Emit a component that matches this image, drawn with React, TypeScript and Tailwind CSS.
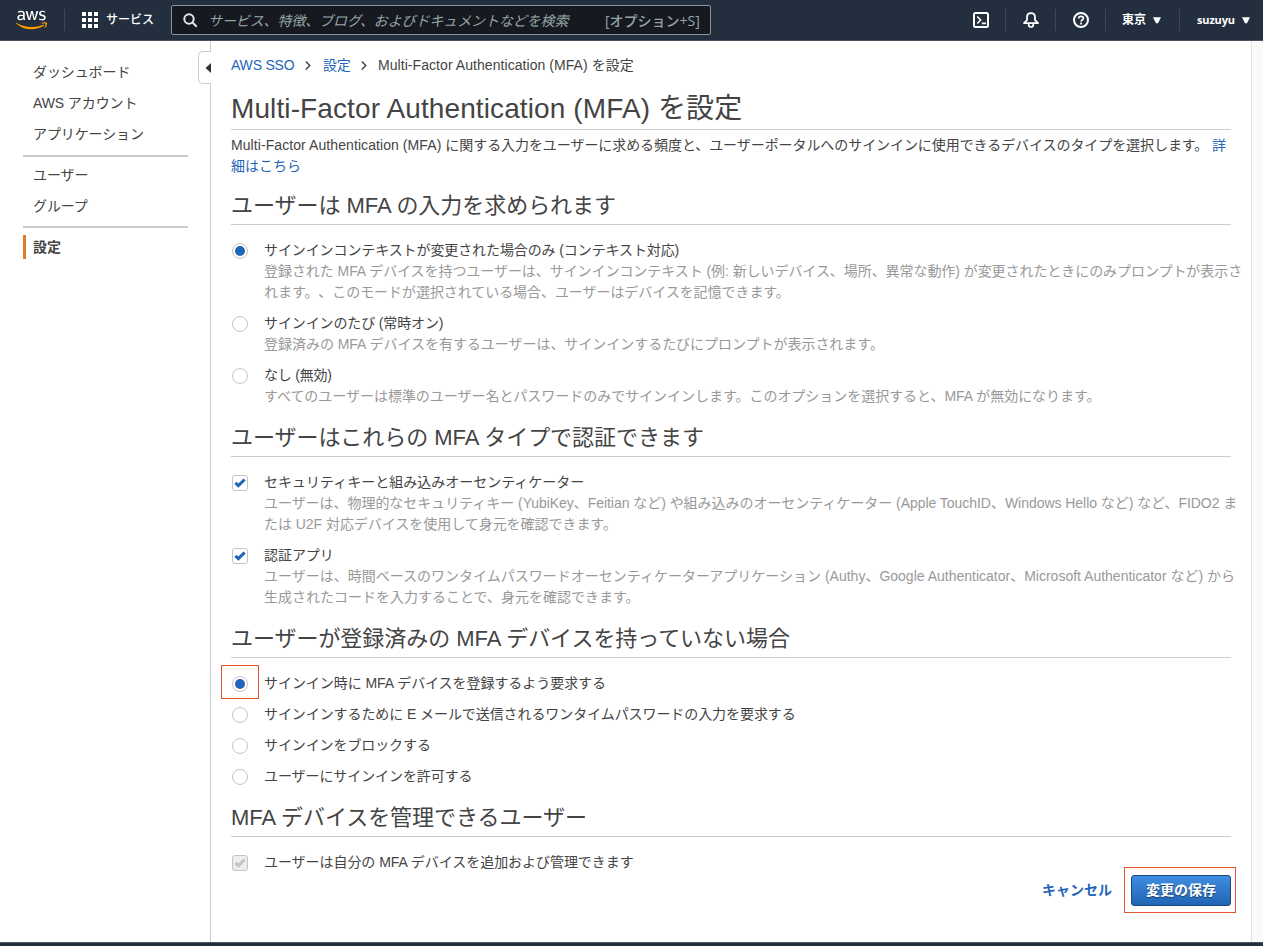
import React from "react";
import { FaAws } from "react-icons/fa";

const cjk = "font-['Liberation_Sans','Noto_Sans_CJK_JP',sans-serif]";
const ember = "font-['Open_Sans','Noto_Sans_CJK_JP',sans-serif]";

function Divider({ className = "" }: { className?: string }) {
  return <span className={`h-[22px] w-px shrink-0 bg-[#414750] ${className}`} />;
}

function Caret() {
  return (
    <svg width="8" height="7" viewBox="0 0 8 7" className="shrink-0" fill="#fff">
      <path d="M0 0.3h8L5 6.3H3z" />
    </svg>
  );
}

function Chevron() {
  return (
    <svg width="6" height="9" viewBox="0 0 6 9" className="shrink-0" fill="none" stroke="#444" strokeWidth="1.4">
      <path d="M0.8 0.6L4.8 4.5L0.8 8.4" />
    </svg>
  );
}

function Header() {
  return (
    <header className={`flex h-[41px] shrink-0 items-center border-b border-[#49525e] bg-[#232f3e] text-white ${ember}`}>
      <svg width="0" height="0" className="absolute">
        <defs>
          <linearGradient id="logo" x1="0" y1="0" x2="0" y2="1">
            <stop offset="0.61" stopColor="#fff" />
            <stop offset="0.61" stopColor="#f90" />
          </linearGradient>
        </defs>
      </svg>
      <div className="ml-4 flex h-10 w-12 items-center">
        <FaAws fill="url(#logo)" className="h-[26px] w-[31px]" />
      </div>
      <Divider />
      <svg width="16" height="16" viewBox="0 0 16 16" className="ml-[17px] shrink-0" fill="#fff">
        {[0, 6, 12].map((y) => [0, 6, 12].map((x) => <rect key={`${x}-${y}`} x={x} y={y} width="4" height="4" />))}
      </svg>
      <span className="ml-2 w-[65px] text-[12px] leading-4 font-medium whitespace-nowrap">サービス</span>
      <div className="flex h-[30px] w-[540px] items-center rounded-[2px] border border-[#879596] bg-[#16191f] text-[14px] text-[#95a5a6]">
        <svg width="15" height="15" viewBox="0 0 15 15" className="ml-[11px] shrink-0" fill="none" stroke="#e3e6e6" strokeWidth="2">
          <circle cx="6" cy="6" r="4.7" />
          <path d="M9.5 9.5l4.2 4.2" />
        </svg>
        <span className="ml-[10px] w-[397px] tracking-[-0.1px] whitespace-nowrap italic">サービス、特徴、ブログ、およびドキュメントなどを検索</span>
        <span className="font-medium whitespace-nowrap">[オプション+S]</span>
      </div>
      <svg width="16" height="16" viewBox="0 0 16 16" className="ml-[262px] shrink-0" fill="none" stroke="#fff" strokeWidth="2">
        <rect x="1" y="1" width="14" height="14" rx="1.5" />
        <path d="M4.3 4.5L7.6 8l-3.3 3.5M8.8 11.3H13" strokeWidth="1.7" />
      </svg>
      <Divider className="ml-4" />
      <svg width="16" height="16" viewBox="0 0 16 16" className="ml-[17px] shrink-0" fill="none" stroke="#fff" strokeWidth="1.8" strokeLinejoin="round">
        <path d="M1 11.1L4 8.2V5.4C4 2.9 5.5 1.2 8 1.2s4 1.7 4 4.2v2.8l3 2.9z" />
        <path d="M5.7 12v.7c0 1.4 1 2.3 2.3 2.3s2.3-.9 2.3-2.3V12" strokeWidth="1.7" />
      </svg>
      <Divider className="ml-4" />
      <svg width="16" height="16" viewBox="0 0 16 16" className="ml-[17px] shrink-0" fill="none" stroke="#fff" strokeWidth="2">
        <circle cx="8" cy="8" r="7" />
        <path d="M5.7 6.5C5.7 5 6.7 4.3 8 4.3s2.4.8 2.4 2c0 1.7-2.3 1.6-2.3 3.3M8.1 10.6v2" strokeWidth="1.7" />
      </svg>
      <Divider className="ml-4" />
      <span className="ml-4 w-[31px] text-[12px] font-bold whitespace-nowrap">東京</span>
      <Caret />
      <Divider className="ml-[18px]" />
      <span className="ml-[17px] w-[45px] text-[11px] font-bold tracking-[-0.15px] whitespace-nowrap">suzuyu</span>
      <Caret />
    </header>
  );
}

function Sidebar() {
  const item = "flex h-[31px] items-center pl-[10px] whitespace-nowrap tracking-[-0.1px]";
  return (
    <nav className="w-[210px] shrink-0 pt-4 pr-[22px] pl-[23px]">
      <div className={item}>ダッシュボード</div>
      <div className={item}>AWS アカウント</div>
      <div className={item}>アプリケーション</div>
      <div className="mt-[5px] mb-[3px] h-[2px] bg-[#ccc]" />
      <div className={item}>ユーザー</div>
      <div className={item}>グループ</div>
      <div className="mt-[4px] mb-[7px] h-[2px] bg-[#ccc]" />
      <div className="flex h-6 items-center border-l-[3px] border-[#dd7b26] pl-[7px] font-bold">設定</div>
    </nav>
  );
}

function Radio({ on = false }: { on?: boolean }) {
  return (
    <span className="flex size-4 shrink-0 items-center justify-center rounded-full border border-[#c4c4c4] bg-white">
      {on && <span className="size-[10px] rounded-full bg-[#1f66b8]" />}
    </span>
  );
}

function Check({ disabled = false }: { disabled?: boolean }) {
  return (
    <span className={`flex size-4 shrink-0 items-center justify-center rounded-[3px] border border-[#c4c4c4] ${disabled ? "bg-[#eee]" : "bg-white"}`}>
      <svg width="12" height="10" viewBox="0 0 12 10" fill="none" stroke={disabled ? "#c4c4c4" : "#1f66b8"} strokeWidth="3.1">
        <path d="M1.4 4.9L4.4 7.7L10.6 1.5" />
      </svg>
    </span>
  );
}

type OptionProps = {
  control: React.ReactNode;
  label: string;
  lines?: string[];
  boxed?: boolean;
  labelClass?: string;
  lineClass?: string;
};

function Option({ control, label, lines = [], boxed = false, labelClass = "tracking-[-0.05px]", lineClass = "tracking-[-0.03px]" }: OptionProps) {
  return (
    <div className="flex leading-[21px] whitespace-nowrap">
      <div className="relative flex h-[21px] w-[33px] shrink-0 items-center pl-px">
        {control}
        {boxed && <span className="absolute -top-[8px] -left-[10px] h-[34px] w-[38px] border border-[#e8532f]" />}
      </div>
      <div>
        <div className={labelClass}>{label}</div>
        {lines.map((l) => (
          <div key={l} className={`text-[#999] ${lineClass}`}>{l}</div>
        ))}
      </div>
    </div>
  );
}

function Section({ title, children }: { title: string; children: React.ReactNode }) {
  return (
    <section>
      <h2 className="h-[50px] w-[1000px] border-b border-[#ccc] pt-[14px] text-[22px] leading-[33px] tracking-[-0.04px] whitespace-nowrap">{title}</h2>
      <div className="flex flex-col gap-[10px] pt-[15px]">{children}</div>
    </section>
  );
}

export default function App() {
  return (
    <div className={`flex h-[946px] w-[1263px] flex-col overflow-hidden bg-white text-[14px] text-[#444] [text-spacing-trim:space-all] ${cjk}`}>
      <Header />
      <div className="flex h-[901px]">
        <Sidebar />
        <main className="relative w-[1041px] shrink-0 border-l border-[#ccc] pl-5">
          <div className="absolute top-[10px] -left-[13px] flex h-[33px] w-[13px] items-center justify-end rounded-l-[5px] border border-r-0 border-[#ccc] bg-white">
            <svg width="6" height="10" viewBox="0 0 6 10" fill="#333">
              <path d="M6 0v10L0.5 5z" />
            </svg>
          </div>
          <div className="mt-[14px] flex h-[21px] items-center whitespace-nowrap">
            <span className="w-[74px] tracking-[-0.2px] text-[#1f66b8]">AWS SSO</span>
            <Chevron />
            <span className="ml-3 w-[38px] tracking-[-0.2px] text-[#1f66b8]">設定</span>
            <Chevron />
            <span className="ml-[11px] tracking-[0.06px]">Multi-Factor Authentication (MFA) を設定</span>
          </div>
          <h1 className="h-[54px] w-[1000px] border-b border-[#ccc] pt-3 text-[28px] leading-[41px] tracking-[0.11px] whitespace-nowrap">
            Multi-Factor Authentication (MFA) を設定
          </h1>
          <p className="h-[45px] pt-[5px] leading-[21px] tracking-[-0.015px] whitespace-nowrap">
            <span className="tracking-[0.08px]">Multi-Factor Authentication (MFA) </span>
            <span className="tracking-[-0.07px]">に関する入力をユーザーに求める頻度と、ユーザーポータルへのサインインに使用できるデバイスのタイプを選択します。 </span>
            <span className="text-[#1f66b8]">詳<br />細はこちら</span>
          </p>
          <Section title="ユーザーは MFA の入力を求められます">
            <Option
              control={<Radio on />}
              label="サインインコンテキストが変更された場合のみ (コンテキスト対応)"
              labelClass="tracking-[-0.1px]"
              lineClass="tracking-[-0.06px]"
              lines={[
                "登録された MFA デバイスを持つユーザーは、サインインコンテキスト (例: 新しいデバイス、場所、異常な動作) が変更されたときにのみプロンプトが表示さ",
                "れます。、このモードが選択されている場合、ユーザーはデバイスを記憶できます。",
              ]}
            />
            <Option
              control={<Radio />}
              label="サインインのたび (常時オン)"
              labelClass="tracking-[-0.12px]"
              lines={["登録済みの MFA デバイスを有するユーザーは、サインインするたびにプロンプトが表示されます。"]}
            />
            <Option
              control={<Radio />}
              label="なし (無効)"
              labelClass="tracking-[-0.2px]"
              lines={["すべてのユーザーは標準のユーザー名とパスワードのみでサインインします。このオプションを選択すると、MFA が無効になります。"]}
            />
          </Section>
          <Section title="ユーザーはこれらの MFA タイプで認証できます">
            <Option
              control={<Check />}
              label="セキュリティキーと組み込みオーセンティケーター"
              labelClass="tracking-normal"
              lineClass="tracking-[-0.04px]"
              lines={[
                "ユーザーは、物理的なセキュリティキー (YubiKey、Feitian など) や組み込みのオーセンティケーター (Apple TouchID、Windows Hello など) など、FIDO2 ま",
                "たは U2F 対応デバイスを使用して身元を確認できます。",
              ]}
            />
            <Option
              control={<Check />}
              label="認証アプリ"
              lineClass="tracking-normal"
              lines={[
                "ユーザーは、時間ベースのワンタイムパスワードオーセンティケーターアプリケーション (Authy、Google Authenticator、Microsoft Authenticator など) から",
                "生成されたコードを入力することで、身元を確認できます。",
              ]}
            />
          </Section>
          <Section title="ユーザーが登録済みの MFA デバイスを持っていない場合">
            <Option control={<Radio on />} label="サインイン時に MFA デバイスを登録するよう要求する" boxed />
            <Option control={<Radio />} label="サインインするために E メールで送信されるワンタイムパスワードの入力を要求する" labelClass="tracking-[-0.08px]" />
            <Option control={<Radio />} label="サインインをブロックする" labelClass="tracking-[-0.1px]" />
            <Option control={<Radio />} label="ユーザーにサインインを許可する" labelClass="tracking-[-0.08px]" />
          </Section>
          <Section title="MFA デバイスを管理できるユーザー">
            <Option control={<Check disabled />} label="ユーザーは自分の MFA デバイスを追加および管理できます" />
          </Section>
          <div className="-mt-[6px] flex h-[46px] w-[1005px] items-center justify-end font-bold">
            <span className="mr-3 text-[#1f66b8]">キャンセル</span>
            <span className="flex h-[46px] w-[112px] items-center justify-end border border-[#e8532f] pr-1">
              <button className="h-[31px] w-[100px] rounded-[3px] border border-[#1a4a80] bg-linear-to-b from-[#3f8de2] to-[#2165b4] leading-[29px] text-white text-shadow-[0_1px_1px_#143a66]">
                変更の保存
              </button>
            </span>
          </div>
        </main>
        <div className="w-3 shrink-0 border-l border-[#e4e4e4] bg-[#fafafa]" />
      </div>
      <footer className="h-1 shrink-0 border-t border-[#49525e] bg-[#232f3e]" />
    </div>
  );
}
